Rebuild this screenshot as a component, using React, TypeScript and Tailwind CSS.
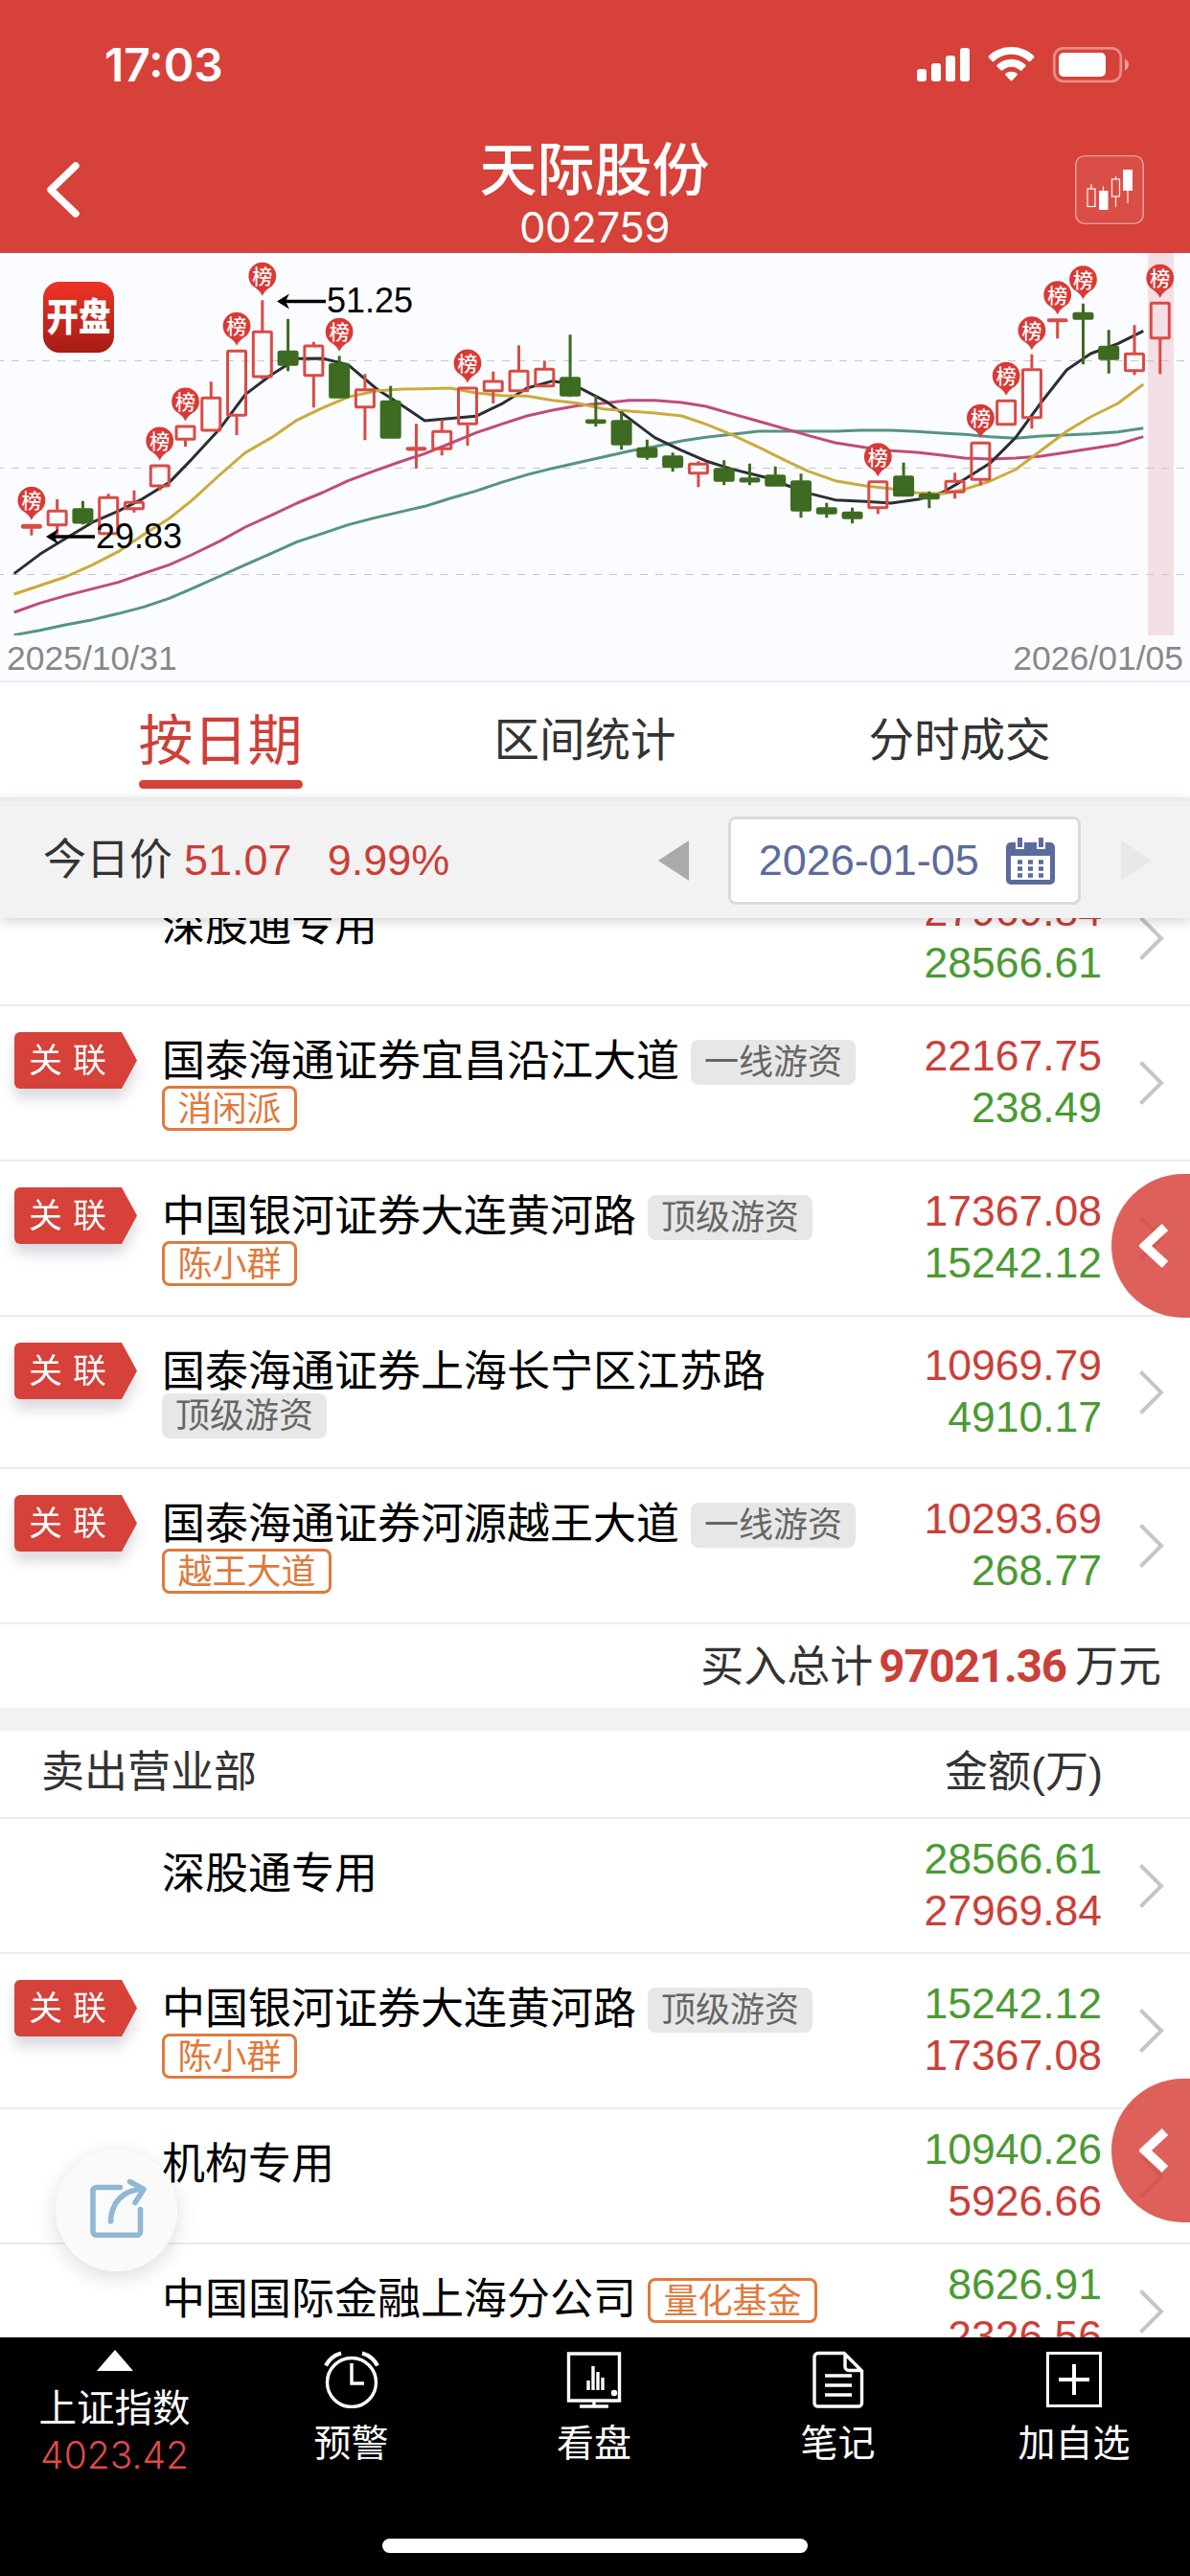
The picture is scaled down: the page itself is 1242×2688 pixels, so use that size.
import type { ReactNode } from "react";
import clsx from "clsx";

type Tag = { text: string; kind: "gray" | "orange" };

type Seat = {
  name: string;
  tag?: Tag;
  subTag?: Tag;
  linked?: boolean;
  top: string;
  bottom: string;
};

const BUY_SEATS: Seat[] = [
  { name: "深股通专用", top: "27969.84", bottom: "28566.61" },
  {
    name: "国泰海通证券宜昌沿江大道",
    tag: { text: "一线游资", kind: "gray" },
    subTag: { text: "消闲派", kind: "orange" },
    linked: true,
    top: "22167.75",
    bottom: "238.49",
  },
  {
    name: "中国银河证券大连黄河路",
    tag: { text: "顶级游资", kind: "gray" },
    subTag: { text: "陈小群", kind: "orange" },
    linked: true,
    top: "17367.08",
    bottom: "15242.12",
  },
  {
    name: "国泰海通证券上海长宁区江苏路",
    subTag: { text: "顶级游资", kind: "gray" },
    linked: true,
    top: "10969.79",
    bottom: "4910.17",
  },
  {
    name: "国泰海通证券河源越王大道",
    tag: { text: "一线游资", kind: "gray" },
    subTag: { text: "越王大道", kind: "orange" },
    linked: true,
    top: "10293.69",
    bottom: "268.77",
  },
];

const SELL_SEATS: Seat[] = [
  { name: "深股通专用", top: "28566.61", bottom: "27969.84" },
  {
    name: "中国银河证券大连黄河路",
    tag: { text: "顶级游资", kind: "gray" },
    subTag: { text: "陈小群", kind: "orange" },
    linked: true,
    top: "15242.12",
    bottom: "17367.08",
  },
  { name: "机构专用", top: "10940.26", bottom: "5926.66" },
  {
    name: "中国国际金融上海分公司",
    tag: { text: "量化基金", kind: "orange" },
    top: "8626.91",
    bottom: "2326.56",
  },
];

// [direction, high, body top, body bottom, low, on the list]
type Candle = ["up" | "down", number, number, number, number, boolean?];

const CANDLES: Candle[] = [
  ["up", 283.3, 283.3, 287.3, 294.7, true],
  ["up", 257, 268.3, 284.7, 293.7],
  ["down", 258.7, 266.7, 282, 283.3],
  ["up", 251.3, 254.3, 293.7, 293.7],
  ["up", 247.7, 259.3, 267.7, 270.7],
  ["up", 221, 221, 244, 247.7, true],
  ["up", 180, 180, 195.3, 202, true],
  ["up", 134.3, 150.3, 186, 186],
  ["up", 101.3, 101.3, 170.3, 190, true],
  ["up", 49.3, 81.3, 130, 131.7, true],
  ["down", 68.7, 102.3, 117.3, 123.3],
  ["up", 92.7, 96, 128.7, 161.3],
  ["down", 107.3, 115.3, 151.3, 151.3, true],
  ["up", 126.3, 141.7, 161.7, 195.3],
  ["down", 138.7, 154.3, 193.3, 193.3],
  ["up", 178.3, 202.7, 206, 224.7],
  ["up", 173.7, 185.3, 205.3, 211.3],
  ["up", 140, 140, 179.3, 201, true],
  ["up", 123.7, 133, 144.7, 157],
  ["up", 96.3, 122.3, 144.7, 144.7],
  ["up", 112.3, 120.3, 139.7, 139.7],
  ["down", 85.3, 129.7, 149.3, 150.3],
  ["down", 148.3, 174, 177.7, 181.3],
  ["down", 165, 174.7, 200.3, 205.3],
  ["down", 194.7, 203.3, 213.3, 215.7],
  ["down", 208.3, 211.7, 223.7, 228.3],
  ["up", 217.3, 219.3, 230.7, 244.3],
  ["down", 216.3, 224.7, 238.3, 242.3],
  ["down", 219.7, 234.7, 239, 242.3],
  ["down", 222.7, 231.7, 243.3, 243.3],
  ["down", 230.3, 237.7, 269.3, 276.3],
  ["down", 260.7, 265.7, 272.3, 276.3],
  ["down", 265.7, 270.3, 277.3, 282.3],
  ["up", 237.7, 237.7, 266.7, 272.3, true],
  ["down", 218.7, 232.7, 253.7, 253.7],
  ["down", 248.7, 251.3, 256.7, 266.3],
  ["up", 229.3, 237.3, 250.3, 256.3],
  ["up", 197.3, 197.3, 237.3, 242.7, true],
  ["up", 153.3, 153.3, 179.7, 179.7, true],
  ["up", 105.7, 120.7, 172.7, 183.3, true],
  ["up", 68.7, 68.7, 70.7, 89.3, true],
  ["down", 52.7, 62.3, 69.3, 116.3, true],
  ["down", 80.3, 97.3, 111.3, 125.7],
  ["up", 75.3, 104.3, 123.7, 127.3],
  ["up", 51.3, 51.3, 89.7, 126.3, true],
];

// moving averages, drawn on a grid three times finer than the candles
const AVERAGES = [
  {
    color: "#559481",
    points:
      "44,1208 125,1193 205,1176 290,1160 370,1141 450,1120 530,1093 600,1063 690,1023 768,988 850,952 930,916 1010,890 1090,863 1170,842 1260,821 1330,805 1410,780 1490,757 1570,730 1650,706 1730,686 1810,668 1890,650 1970,632 2050,618 2135,600 2210,589 2290,580 2375,570 2460,570 2620,570 2690,567 2790,567 2870,571 2950,576 3020,580 3100,587 3180,592 3260,585 3415,578 3500,572 3580,560",
  },
  {
    color: "#c04c78",
    points:
      "44,1137 125,1108 205,1085 290,1063 370,1043 450,1015 530,988 600,957 690,913 768,870 850,833 930,795 1010,762 1090,725 1170,695 1260,663 1330,640 1400,612 1490,575 1570,548 1650,522 1730,504 1810,490 1890,482 1970,473 2050,473 2135,480 2210,492 2290,515 2380,540 2460,563 2530,583 2615,606 2710,621 2790,631 2870,636 2950,645 3020,654 3100,657 3180,654 3260,648 3340,636 3500,611 3580,587",
  },
  {
    color: "#2b2f33",
    points:
      "44,1016 125,955 190,915 290,855 370,820 440,785 530,730 600,658 690,560 768,455 850,393 930,343 1010,342 1090,362 1180,438 1260,490 1330,537 1490,523 1570,485 1650,435 1730,413 1780,420 1820,437 1900,478 1970,530 2050,590 2130,628 2210,663 2290,688 2395,714 2460,738 2540,766 2615,785 2710,790 2790,795 2880,782 2950,762 3000,733 3100,670 3180,590 3260,480 3340,378 3415,327 3500,296 3580,256",
  },
  {
    color: "#cbab3c",
    points:
      "44,1080 125,1053 205,1026 290,988 370,947 450,893 530,843 600,787 690,705 768,637 850,590 930,535 1010,497 1090,463 1180,443 1260,438 1320,437 1410,435 1490,450 1570,458 1650,460 1730,473 1810,482 1890,500 1970,507 2050,513 2135,522 2210,548 2290,580 2380,622 2460,662 2530,695 2615,725 2710,741 2790,750 2870,763 2950,766 3020,752 3100,726 3180,690 3260,630 3340,570 3415,525 3500,483 3580,423",
  },
];

const UP = "#d94b45";
const DOWN = "#3d6b21";

function StatusBar() {
  return (
    <div className="flex h-[135px] items-start justify-between pr-[64px] pl-[109px] pt-[39px] text-white">
      <span className="font-['Inter'] text-[48px] leading-[58px] font-semibold">17:03</span>
      <svg width="222" height="38" viewBox="0 0 222 38" className="mt-[10px]" fill="#fff">
        <rect x="1" y="23" width="10" height="13" rx="3" />
        <rect x="16" y="17" width="10" height="19" rx="3" />
        <rect x="31" y="9" width="10" height="27" rx="3" />
        <rect x="46" y="1" width="10" height="35" rx="3" />
        <path d="M99.500 0c9.300 0 17.500 3.400 23.500 9.200.6.600.6 1.400 0 2l-3.600 3.700c-.5.500-1.300.5-1.900 0-4.700-4.500-11-7.200-18-7.200s-13.300 2.700-18 7.200c-.6.500-1.400.5-1.900 0L76 11.200c-.6-.6-.6-1.400 0-2C82 3.400 90.200 0 99.500 0z" />
        <path d="M99.500 12.700c5.800 0 10.900 2.200 14.800 5.800.6.600.6 1.400 0 2l-3.700 3.800c-.5.500-1.300.5-1.900.1-2.500-2.300-5.700-3.700-9.200-3.700s-6.700 1.400-9.200 3.700c-.6.400-1.400.4-1.900-.1l-3.700-3.800c-.6-.6-.6-1.400 0-2 3.900-3.600 9-5.800 14.800-5.800z" />
        <path d="M99.500 25.700c2.300 0 4.200.7 5.800 1.900.6.500.7 1.300.1 1.900l-5 5.500c-.5.600-1.300.6-1.800 0l-5-5.500c-.6-.6-.5-1.400.1-1.900 1.600-1.200 3.500-1.900 5.800-1.900z" />
        <rect x="144.300" y="1.300" width="69.500" height="34.500" rx="9.500" fill="none" stroke="#fff" strokeOpacity=".4" strokeWidth="2.800" />
        <rect x="149" y="6" width="49" height="25" rx="5" />
        <path d="M218 12.500c2.500 1 4 3.300 4 6s-1.500 5-4 6z" opacity=".5" />
      </svg>
    </div>
  );
}

function Header() {
  return (
    <header className="h-[264px] bg-[#d64139]">
      <StatusBar />
      <div className="flex items-start justify-between pr-[48px] pl-[47px] text-white">
        <svg width="72" height="60" viewBox="0 0 72 60" className="mt-[33px]">
          <path d="M32 5 6 30l26 25" fill="none" stroke="#fff" strokeWidth="7.500" strokeLinecap="round" strokeLinejoin="round" />
        </svg>
        <div className="flex flex-col items-center pt-[10px]">
          <h1 className="text-[60px] leading-[68px] font-medium">天际股份</h1>
          <span className="mt-[2px] font-['Inter'] text-[43.500px] leading-[44px] font-normal tracking-[-0.3px]">002759</span>
        </div>
        <svg width="72" height="72" viewBox="0 0 72 72" className="mt-[27px]">
          <rect x=".75" y=".75" width="70.500" height="70.500" rx="9" fill="#fff" fillOpacity=".08" stroke="#fff" strokeOpacity=".6" strokeWidth="1.200" />
          <g stroke="#fff" strokeWidth="1.200" fill="none">
            <path d="M17 30v5M29.500 32.500v5M42.500 22v3M42.500 43v11M55 37v13" />
            <rect x="13" y="35" width="8" height="18.500" />
            <rect x="38.500" y="25" width="8" height="18" />
          </g>
          <path d="M25 37h9.500v20H25zM50 15h10v22H50z" fill="#fff" />
        </svg>
      </div>
    </header>
  );
}

function ListBadge({ x, tip }: { x: number; tip: number }) {
  return (
    <g transform={`translate(${x} ${tip})`}>
      <path d="M0 0C-2.500-5.500-6-7.500-10-10.300A14.400 14.400 0 1 1 10-10.300C6-7.500 2.500-5.500 0 0z" fill="#d93a36" />
      <text y="-12.500" textAnchor="middle" fontSize="21" fontWeight="500" fill="#fff">
        榜
      </text>
    </g>
  );
}

function Arrow({ x, y, length }: { x: number; y: number; length: number }) {
  return (
    <g transform={`translate(${x} ${y})`}>
      <path d={`M5 0h${length - 5}`} stroke="#000" strokeWidth="3.400" />
      <path d="M0 0l13-8-4 8 4 8z" fill="#000" />
    </g>
  );
}

function PriceChart() {
  return (
    <section className="h-[448px] border-b-2 border-[#e9ebee] bg-[#fbfcff]">
      <svg width="1242" height="399" viewBox="0 0 1242 399" className="block">
        <defs>
          <linearGradient id="logo" x1="0" y1="0" x2="0" y2="1">
            <stop offset="0" stopColor="#ef3325" />
            <stop offset="1" stopColor="#a51c16" />
          </linearGradient>
        </defs>
        <rect x="1198" width="27" height="399" fill="#f3dfe4" />
        {[112.5, 224.5, 335.5].map((y) => (
          <path key={y} d={`M-4 ${y}H1242`} stroke="#c3c8d0" strokeDasharray="8 8" />
        ))}
        <rect x="45" y="30" width="74" height="74" rx="17" fill="url(#logo)" />
        <text transform="translate(82 81) scale(1 1.180)" textAnchor="middle" fontSize="33.500" fontWeight="900" fill="#fff">
          开盘
        </text>

        <g transform="translate(0 -4) scale(.33333)" fill="none" strokeWidth="9" strokeLinejoin="round">
          {AVERAGES.map((line) => (
            <polyline key={line.color} points={line.points} stroke={line.color} />
          ))}
        </g>

        {CANDLES.map(([dir, high, top, bottom, low, listed], i) => {
          const x = 32.9 + i * 26.77;
          const color = dir === "up" ? UP : DOWN;
          return (
            <g key={i} stroke={color} strokeWidth="3">
              <path d={`M${x} ${high}V${top}M${x} ${bottom}V${low}`} />
              <rect
                x={x - 9.5}
                y={top + 1}
                width="19"
                height={Math.max(bottom - top - 2, 1)}
                rx="1"
                fill={dir === "up" ? "none" : color}
              />
              {listed && (
                <g stroke="none">
                  <ListBadge x={x} tip={high - 4.5} />
                </g>
              )}
            </g>
          );
        })}

        <Arrow x={289} y={50.5} length={51} />
        <Arrow x={48} y={296} length={51} />
        <g fontSize="36">
          <text x="341" y="62">51.25</text>
          <text x="100" y="308">29.83</text>
        </g>
      </svg>
      <div className="flex justify-between px-[7px] pt-[3px] text-[35.500px] leading-[42px] text-[#888]">
        <span>2025/10/31</span>
        <span>2026/01/05</span>
      </div>
    </section>
  );
}

function Tabs() {
  return (
    <nav className="flex h-[120px] bg-white text-[47.500px] leading-[70px] text-[#333]">
      <div className="flex w-[460px] justify-center">
        <div className="flex flex-col items-center pt-[26px]">
          <span className="text-[57px] text-[#cf3f38]">按日期</span>
          <span className="mt-[6px] h-[9px] w-[171px] rounded-full bg-[#d64139]" />
        </div>
      </div>
      <div className="w-[301px] pt-[26px] text-center">区间统计</div>
      <div className="w-[481px] pt-[26px] text-center">分时成交</div>
    </nav>
  );
}

function CalendarIcon() {
  return (
    <svg width="51" height="49" viewBox="0 0 51 49">
      <path d="M5 5h41a5 5 0 0 1 5 5v34a5 5 0 0 1-5 5H5a5 5 0 0 1-5-5V10a5 5 0 0 1 5-5z" fill="#5b6b9e" />
      <path d="M5 19h41v25H5zM10 0h9v12h-9zM32 0h9v12h-9z" fill="#fff" />
      <path d="M12 0h5v10h-5zM34 0h5v10h-5z" fill="#5b6b9e" />
      <path d="M12 25.500h27M12 32.500h27M12 39.500h27" stroke="#5b6b9e" strokeWidth="4.500" strokeDasharray="5 6" />
    </svg>
  );
}

function PriceBar() {
  return (
    <div className="relative z-10 flex h-[126px] items-center border-t-4 border-[#ebebeb] bg-[#f2f2f2] pt-[2px] pl-[45px] text-[45px] text-[#cb3f39] shadow-[0_4px_12px_rgba(0,0,0,0.16)]">
      <span className="text-[#333]">今日价</span>
      <span className="ml-[12px]">51.07</span>
      <span className="ml-[37px] w-[345px]">9.99%</span>
      <svg width="32" height="42" viewBox="0 0 32 42">
        <path d="M32 0v42L0 21z" fill="#aaa" />
      </svg>
      <div className="ml-[41px] flex h-[92px] w-[368px] items-center rounded-lg border-3 border-[#dadada] bg-white pl-[29px] text-[#5b6b9e]">
        <span>2026-01-05</span>
        <span className="ml-[28px]">
          <CalendarIcon />
        </span>
      </div>
      <svg width="32" height="42" viewBox="0 0 32 42" className="ml-[42px]">
        <path d="M0 0v42l32-21z" fill="#e8e8e8" />
      </svg>
    </div>
  );
}

function TagLabel({ tag }: { tag: Tag }) {
  return (
    <span
      className={clsx(
        "flex h-[47px] items-center rounded-lg text-[36px] leading-none whitespace-nowrap",
        tag.kind === "gray"
          ? "bg-[#e7e7e7] px-[14px] text-[#666]"
          : "border-3 border-[#df7a3c] px-[13.500px] pt-[2px] text-[#df7a3c]",
      )}
    >
      {tag.text}
    </span>
  );
}

function LinkedFlag() {
  return (
    <div className="mt-[27px] ml-[15px] h-[59px] w-[128px] drop-shadow-[0_10px_7px_rgba(60,60,90,0.2)]">
      <div className="flex h-full items-center gap-[11px] rounded-l-md bg-[#d64139] pl-[15px] text-[35px] leading-none text-white [clip-path:polygon(0_0,112px_0,100%_50%,112px_100%,0_100%)]">
        <span>关</span>
        <span>联</span>
      </div>
    </div>
  );
}

function SeatRow({ seat, side }: { seat: Seat; side: "buy" | "sell" }) {
  return (
    <div className="flex min-h-[141px] border-b-2 border-[#ececec]">
      <div className="w-[169px] shrink-0">{seat.linked && <LinkedFlag />}</div>
      <div className="flex-1 pt-[32px] pb-[30px]">
        <div className={clsx("flex items-start gap-[12px]", seat.tag ? "h-[51px]" : "h-[48px]")}>
          <span className="text-[45px] leading-[51px] whitespace-nowrap text-black">{seat.name}</span>
          {seat.tag && (
            <div className="pt-[3px]">
              <TagLabel tag={seat.tag} />
            </div>
          )}
        </div>
        {seat.subTag && (
          <div className="flex">
            <TagLabel tag={seat.subTag} />
          </div>
        )}
      </div>
      <div
        className={clsx(
          "flex flex-col justify-center pb-[2px] text-right text-[44.500px] leading-[54px]",
          side === "buy" ? "text-[#cb3f39]" : "text-[#4b9a33]",
        )}
      >
        <span>{seat.top}</span>
        <span className={side === "buy" ? "text-[#4b9a33]" : "text-[#cb3f39]"}>{seat.bottom}</span>
      </div>
      <div className="flex w-[92px] items-center pl-[39px]">
        <svg width="26" height="46" viewBox="0 0 26 46">
          <path d="M1.500 1.500 23 23 1.500 44.500" fill="none" stroke="#c6c6c6" strokeWidth="4" />
        </svg>
      </div>
    </div>
  );
}

function SideHandle({ className }: { className: string }) {
  return (
    <div className={clsx("absolute right-0 z-20 flex h-[150px] w-[82px] items-center rounded-l-full bg-[#d64139]/83 pl-[29px]", className)}>
      <svg width="32" height="46" viewBox="0 0 32 46">
        <path d="M27 3.500 6 23l21 19.500" fill="none" stroke="#fff" strokeWidth="9.500" />
      </svg>
    </div>
  );
}

function ShareButton() {
  return (
    <div className="absolute top-[2243px] left-[58px] z-20 flex size-[127px] items-center justify-center rounded-full bg-[#fafafa]/95 pb-[6px] pl-[2px] shadow-[0_6px_22px_rgba(0,0,0,0.14)]">
      <svg width="60" height="64" viewBox="0 0 60 64" fill="none" stroke="#90b8d4" strokeWidth="5.600" strokeLinecap="round" strokeLinejoin="round">
        <path d="M32.500 10.500H7.500A3.500 3.500 0 0 0 4 14v42.700a3.500 3.500 0 0 0 3.500 3.500h42.500a3.500 3.500 0 0 0 3.500-3.500V33.500" />
        <path d="M22.500 46C23 28 34 12.500 57 12.500M42.500 4.500l14.500 8L48 26.500" />
      </svg>
    </div>
  );
}

function TabItem({ className, label, children }: { className: string; label: string; children: ReactNode }) {
  return (
    <div className={clsx("flex flex-col items-center pt-[14px]", className)}>
      <svg width="60" height="60" viewBox="0 0 60 60" fill="none" stroke="#fff" strokeWidth="3.400">
        {children}
      </svg>
      <span className="mt-[12px] text-[39px] leading-[50px]">{label}</span>
    </div>
  );
}

function BottomBar() {
  return (
    <footer className="flex h-[249px] flex-col items-center bg-black text-white">
      <div className="flex h-[210px] w-full">
        <div className="flex w-[239px] flex-col items-center pt-[13px]">
          <svg width="38" height="22" viewBox="0 0 38 22">
            <path d="M19 0 38 22H0z" fill="#fff" />
          </svg>
          <span className="mt-[14px] text-[39.500px] leading-[50px]">上证指数</span>
          <span className="-mt-[1px] font-['Inter'] text-[39px] leading-[50px] font-light text-[#dd4a48]">4023.42</span>
        </div>
        <TabItem className="w-[255px]" label="预警">
          <circle cx="30" cy="33" r="25.500" />
          <path d="M30 13v21h13" />
          <path d="M3 15.500C6.500 9 12 4.500 19 2.500M57 15.500C53.500 9 48 4.500 41 2.500" strokeWidth="4.200" />
        </TabItem>
        <TabItem className="w-[252px]" label="看盘">
          <path d="M3.500 3h53v49h-53zM30 52v6M15 58h30" />
          <path d="M24 31v10M29 16v25M34 22v19M39 28v13" />
          <circle cx="51" cy="44" r="1.500" />
        </TabItem>
        <TabItem className="w-[257px]" label="笔记">
          <path d="M9 2.500h27L54.500 21v33.500a3.500 3.500 0 0 1-3.500 3.500H8.500A3.500 3.500 0 0 1 5 54.500v-48A4 4 0 0 1 9 2.500zM37 3v13.500a4 4 0 0 0 4 4h13" />
          <path d="M16 26h28M16 36h28M16 46h28" />
        </TabItem>
        <TabItem className="w-[236px]" label="加自选">
          <path d="M2.500 2.500h55v55h-55z" strokeWidth="3" />
          <path d="M30 14v32M14 30h32" strokeWidth="4" />
        </TabItem>
      </div>
      <div className="h-[15px] w-[444px] rounded-full bg-white" />
    </footer>
  );
}

export default function App() {
  return (
    <div className="relative flex h-[2688px] w-[1242px] flex-col overflow-hidden bg-white font-['Liberation_Sans','Noto_Sans_CJK_SC',sans-serif] text-black">
      <Header />
      <PriceChart />
      <Tabs />
      <PriceBar />
      <main className="h-[1481px] overflow-hidden text-[#333]">
        <div className="-mt-[49px]">
          {BUY_SEATS.map((seat) => (
            <SeatRow key={seat.name} seat={seat} side="buy" />
          ))}
        </div>
        <div className="flex h-[87px] items-center justify-end pt-[2px] pr-[30px] text-[45px]">
          <span>买入总计</span>
          <span className="mr-[9px] ml-[6px] font-['Roboto'] text-[47.500px] font-bold tracking-[-1.1px] text-[#cb3f39]">97021.36</span>
          <span>万元</span>
        </div>
        <div className="h-[24px] bg-[#f2f2f2]" />
        <div className="flex h-[92px] items-center justify-between border-b-2 border-[#ececec] pr-[91px] pb-[3px] pl-[43px] text-[45px]">
          <span>卖出营业部</span>
          <span>金额(万)</span>
        </div>
        {SELL_SEATS.map((seat) => (
          <SeatRow key={seat.name} seat={seat} side="sell" />
        ))}
      </main>
      <BottomBar />
      <SideHandle className="top-[1225px]" />
      <SideHandle className="top-[2169px]" />
      <ShareButton />
    </div>
  );
}
